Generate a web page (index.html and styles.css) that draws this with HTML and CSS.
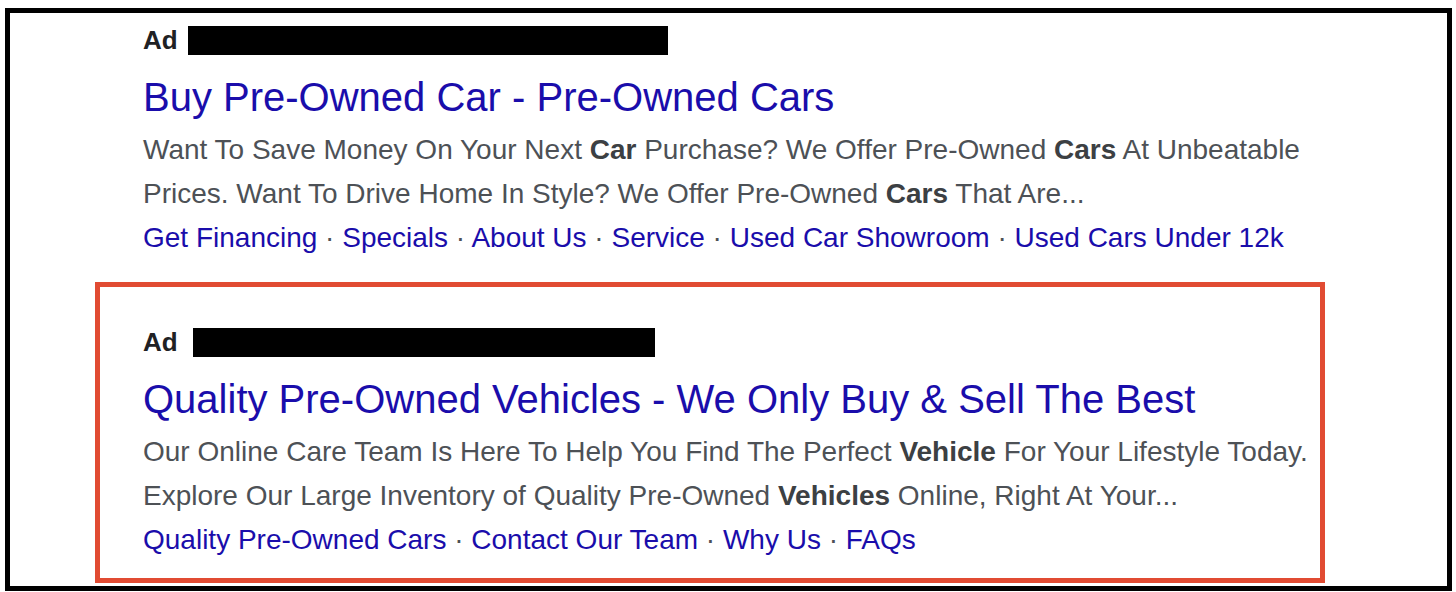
FILE: index.html
```html
<!DOCTYPE html>
<html lang="en">
<head>
<meta charset="utf-8">
<title>Ads</title>
<link rel="stylesheet" href="styles.css">
</head>
<body>
<div class="frame">
  <div class="ad ad-first">
    <div class="ad-label"><span class="ad-tag">Ad</span><span class="redact redact-1"></span></div>
    <div class="ad-title">Buy Pre-Owned Car - Pre-Owned Cars</div>
    <div class="ad-desc">Want To Save Money On Your Next <b>Car</b> Purchase? We Offer Pre-Owned <b>Cars</b> At Unbeatable<br>Prices. Want To Drive Home In Style? We Offer Pre-Owned <b>Cars</b> That Are...</div>
    <div class="ad-links"><span class="lnk">Get Financing</span><span class="sep"> · </span><span class="lnk">Specials</span><span class="sep"> · </span><span class="lnk">About Us</span><span class="sep"> · </span><span class="lnk">Service</span><span class="sep"> · </span><span class="lnk">Used Car Showroom</span><span class="sep"> · </span><span class="lnk">Used Cars Under 12k</span></div>
  </div>
  <div class="ad ad-highlight">
    <div class="ad-label"><span class="ad-tag">Ad</span><span class="redact redact-2"></span></div>
    <div class="ad-title">Quality Pre-Owned Vehicles - We Only Buy &amp; Sell The Best</div>
    <div class="ad-desc">Our Online Care Team Is Here To Help You Find The Perfect <b>Vehicle</b> For Your Lifestyle Today.<br>Explore Our Large Inventory of Quality Pre-Owned <b>Vehicles</b> Online, Right At Your...</div>
    <div class="ad-links"><span class="lnk">Quality Pre-Owned Cars</span><span class="sep"> · </span><span class="lnk">Contact Our Team</span><span class="sep"> · </span><span class="lnk">Why Us</span><span class="sep"> · </span><span class="lnk">FAQs</span></div>
  </div>
</div>
</body>
</html>
```
FILE: styles.css
```css
html, body {
  margin: 0;
  padding: 0;
  background: #ffffff;
}
body {
  font-family: "Liberation Sans", Arial, sans-serif;
}
.frame {
  box-sizing: border-box;
  margin: 8px 0 0 5px;
  width: 1447px;
  height: 583px;
  border: 5px solid #000;
  padding: 12px 0 3px 0;
}
.ad-first {
  margin-left: 133px;
}
.ad-highlight {
  box-sizing: border-box;
  margin: 22px 0 0 85px;
  width: 1230px;
  height: 301px;
  border: 5px solid #e14b32;
  padding: 40px 0 0 43px;
}
.ad-label {
  display: flex;
  align-items: center;
  height: 30px;
}
.ad-tag {
  font-weight: bold;
  font-size: 26px;
  color: #202124;
  line-height: 30px;
}
.redact {
  display: block;
  height: 29px;
  background: #000;
  margin-left: 10px;
}
.redact-1 { width: 480px; }
.redact-2 { width: 462px; margin-left: 15px; }
.ad-title {
  margin-top: 16px;
  font-size: 40px;
  line-height: 52px;
  color: #1a0dab;
  white-space: nowrap;
}
.ad-desc {
  margin-top: 5px;
  font-size: 28px;
  line-height: 44px;
  color: #4d5156;
  white-space: nowrap;
}
.ad-desc b {
  color: #3c4043;
}
.ad-links {
  font-size: 28px;
  line-height: 44px;
  white-space: nowrap;
}
.lnk {
  color: #1a0dab;
}
.sep {
  color: #4d5156;
}
```
